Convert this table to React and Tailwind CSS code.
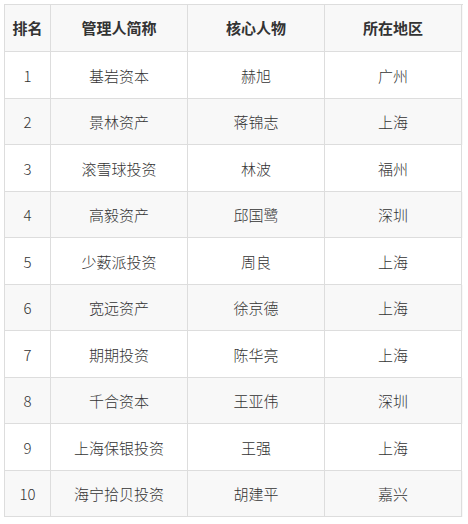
const rows = [
  ["1", "基岩资本", "赫旭", "广州"],
  ["2", "景林资产", "蒋锦志", "上海"],
  ["3", "滚雪球投资", "林波", "福州"],
  ["4", "高毅资产", "邱国鹭", "深圳"],
  ["5", "少薮派投资", "周良", "上海"],
  ["6", "宽远资产", "徐京德", "上海"],
  ["7", "期期投资", "陈华亮", "上海"],
  ["8", "千合资本", "王亚伟", "深圳"],
  ["9", "上海保银投资", "王强", "上海"],
  ["10", "海宁拾贝投资", "胡建平", "嘉兴"],
];

const cols = ["w-[46px]", "w-[137px]", "w-[137px]", "w-[137px]"];

const App = () => {
  return (
    <div
      className="bg-white w-[468px] h-[524px] pt-[4px] pl-[4px] text-[#333]"
      style={{ fontFamily: '"Microsoft YaHei", "Noto Sans CJK SC", sans-serif' }}
    >
      <div className="w-[459px] border-t border-l border-[#dddddd]">
        {/* header */}
        <div className="flex h-[47px] bg-[#f8f8f8] font-bold text-[15px]">
          {["排名", "管理人简称", "核心人物", "所在地区"].map((h, i) => (
            <div
              key={h}
              className={`${cols[i]} flex items-center justify-center border-r border-b border-[#dddddd]`}
            >
              {h}
            </div>
          ))}
        </div>
        {rows.map((r, idx) => (
          <div
            key={r[0]}
            className={`flex text-[15px] font-light ${idx % 2 === 0 ? "h-[47px] bg-white" : "h-[46px] bg-[#f8f8f8]"}`}
          >
            {r.map((c, i) => (
              <div
                key={i}
                className={`${cols[i]} flex items-center justify-center pt-[2px] border-r border-b border-[#dddddd]`}
              >
                {c}
              </div>
            ))}
          </div>
        ))}
      </div>
    </div>
  );
};

export default App;
